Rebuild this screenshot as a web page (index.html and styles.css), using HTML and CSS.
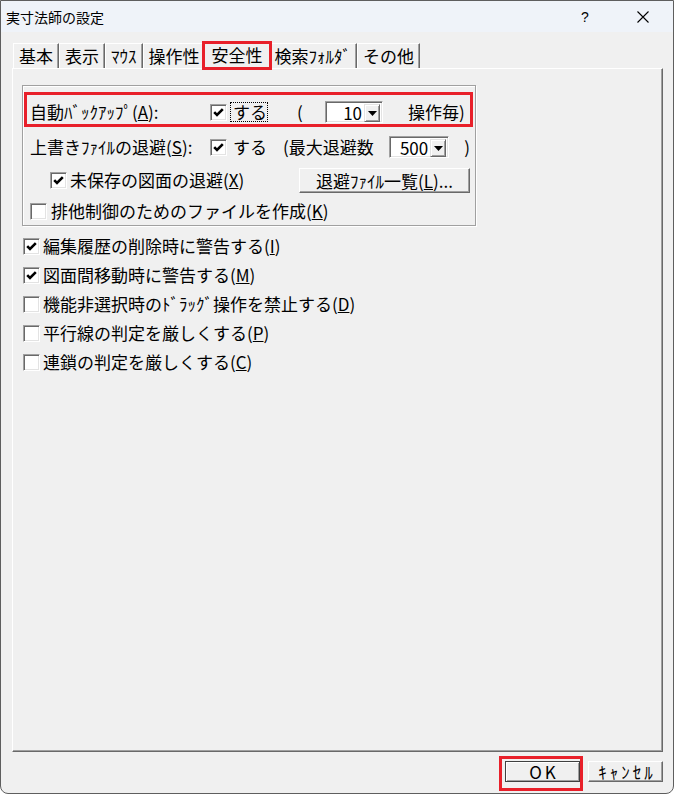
FILE: index.html
```html
<!DOCTYPE html>
<html lang="ja">
<head>
<meta charset="utf-8">
<title>実寸法師の設定</title>
<link rel="stylesheet" href="styles.css">
</head>
<body>
<div class="window">
  <div class="titlebar">
    <span class="title">実寸法師の設定</span>
    <span class="help">?</span>
    <span class="close"><svg width="12" height="12" viewBox="0 0 12 12"><path d="M0.5 0.5 L11.5 11.5 M11.5 0.5 L0.5 11.5" stroke="#000" stroke-width="1.1" fill="none"/></svg></span>
  </div>
  <div class="tabs">
    <div class="tab">基本</div>
    <div class="tab">表示</div>
    <div class="tab">ﾏｳｽ</div>
    <div class="tab">操作性</div>
    <div class="tab active">安全性</div>
    <div class="tab">検索ﾌｫﾙﾀﾞ</div>
    <div class="tab">その他</div>
  </div>
  <div class="panel">
    <div class="group">
      <div class="row row-auto">
        <span class="lbl">自動ﾊﾞｯｸｱｯﾌﾟ(<u>A</u>):</span>
        <span class="cb"><svg width="11" height="9" viewBox="0 0 11 9"><path d="M1.2 4.2 L4 7 L9.8 1.2" stroke="#000" stroke-width="2.6" fill="none"/></svg></span>
        <span class="yes focus">する</span>
        <span class="po">(</span>
        <span class="combo c10"><span class="cv">10</span><span class="dd"><svg width="9" height="5" viewBox="0 0 9 5"><path d="M0 0 H9 L4.5 5 Z" fill="#000"/></svg></span></span>
        <span class="per">操作毎)</span>
      </div>
      <div class="row row-over">
        <span class="lbl">上書きﾌｧｲﾙの退避(<u>S</u>):</span>
        <span class="cb"><svg width="11" height="9" viewBox="0 0 11 9"><path d="M1.2 4.2 L4 7 L9.8 1.2" stroke="#000" stroke-width="2.6" fill="none"/></svg></span>
        <span class="yes">する</span>
        <span class="max">(最大退避数</span>
        <span class="combo c500"><span class="cv">500</span><span class="dd"><svg width="9" height="5" viewBox="0 0 9 5"><path d="M0 0 H9 L4.5 5 Z" fill="#000"/></svg></span></span>
        <span class="pc">)</span>
      </div>
      <div class="row row-unsaved">
        <span class="cb"><svg width="11" height="9" viewBox="0 0 11 9"><path d="M1.2 4.2 L4 7 L9.8 1.2" stroke="#000" stroke-width="2.6" fill="none"/></svg></span>
        <span class="txt">未保存の図面の退避(<u>X</u>)</span>
        <button class="btn btn-list">退避ﾌｧｲﾙ一覧(<u>L</u>)...</button>
      </div>
      <div class="row row-lock">
        <span class="cb"></span>
        <span class="txt">排他制御のためのファイルを作成(<u>K</u>)</span>
      </div>
    </div>
    <div class="list">
      <div class="item">
        <span class="cb"><svg width="11" height="9" viewBox="0 0 11 9"><path d="M1.2 4.2 L4 7 L9.8 1.2" stroke="#000" stroke-width="2.6" fill="none"/></svg></span>
        <span class="txt">編集履歴の削除時に警告する(<u>I</u>)</span>
      </div>
      <div class="item">
        <span class="cb"><svg width="11" height="9" viewBox="0 0 11 9"><path d="M1.2 4.2 L4 7 L9.8 1.2" stroke="#000" stroke-width="2.6" fill="none"/></svg></span>
        <span class="txt">図面間移動時に警告する(<u>M</u>)</span>
      </div>
      <div class="item">
        <span class="cb"></span>
        <span class="txt">機能非選択時のﾄﾞﾗｯｸﾞ操作を禁止する(<u>D</u>)</span>
      </div>
      <div class="item">
        <span class="cb"></span>
        <span class="txt">平行線の判定を厳しくする(<u>P</u>)</span>
      </div>
      <div class="item">
        <span class="cb"></span>
        <span class="txt">連鎖の判定を厳しくする(<u>C</u>)</span>
      </div>
    </div>
  </div>
  <div class="buttons">
    <button class="btn btn-ok">OK</button>
    <button class="btn btn-cancel">ｷｬﾝｾﾙ</button>
  </div>
</div>
</body>
</html>
```

FILE: styles.css
```css
* { box-sizing: border-box; }
html, body { margin: 0; padding: 0; }
body {
  width: 674px;
  height: 794px;
  background: #ffffff;
  font-family: "Noto Sans CJK JP", "Noto Sans", sans-serif;
  font-size: 17px;
  color: #000;
}
.window {
  width: 674px;
  height: 794px;
  border: 1px solid #5e5e5e;
  border-radius: 0 0 8px 8px;
  background: #f0f0f0;
  overflow: hidden;
  display: flex;
  flex-direction: column;
}
.titlebar {
  height: 31px;
  flex-shrink: 0;
  background: #eff3f9;
  display: flex;
  align-items: center;
}
.title {
  flex: 1;
  margin-left: 5px;
  font-size: 14px;
  line-height: 1;
}
.help {
  width: 20px;
  text-align: center;
  font-family: "Liberation Sans", sans-serif;
  font-size: 14px;
  margin-right: 19px;
}
.close {
  width: 58px;
  display: flex;
  justify-content: center;
  margin-right: 1px;
}
.tabs {
  display: flex;
  align-items: flex-end;
  height: 25px;
  margin: 11px 0 0 12px;
  position: relative;
  z-index: 2;
}
.tab {
  height: 25px;
  padding: 0 5px;
  line-height: 23px;
  border-top: 1px solid #fff;
  border-left: 1px solid #fff;
  border-right: 1px solid #696969;
  box-shadow: inset -1px 0 0 #a0a0a0;
  white-space: nowrap;
}
.tab.active {
  height: 28px;
  margin: 0 -2px -1px -2px;
  padding: 0 7px;
  line-height: 26px;
  background: #f0f0f0;
  position: relative;
}
.tab.active::after {
  content: "";
  position: absolute;
  left: -3px;
  right: -2px;
  top: -1px;
  bottom: -1px;
  border: 3px solid #e8202a;
}
.panel {
  margin-left: 11px;
  width: 651px;
  height: 684px;
  flex-shrink: 0;
  border-top: 1px solid #fff;
  border-left: 1px solid #fff;
  border-right: 1px solid #696969;
  border-bottom: 1px solid #696969;
  box-shadow: inset -1px -1px 0 #a0a0a0;
  padding: 16px 0 0 9px;
}
.group {
  width: 454px;
  height: 141px;
  border: 1px solid #a0a0a0;
  box-shadow: inset 1px 1px 0 #fff, 1px 1px 0 #fff;
  padding: 11px 5px 0 7px;
}
.row {
  display: flex;
  align-items: center;
  height: 30px;
  position: relative;
  white-space: nowrap;
  line-height: 1.2;
}
.row-auto::after {
  content: "";
  position: absolute;
  left: -6px;
  right: -3px;
  top: -5px;
  bottom: 0;
  border: 3px solid #e8202a;
}
.row-over { margin-top: 5px; }
.row-unsaved { margin-top: 3px; padding-left: 20px; }
.row-lock { margin-top: 2px; height: 28px; }
.lbl { width: 180px; flex-shrink: 0; }
.cb {
  width: 17px;
  height: 17px;
  flex-shrink: 0;
  background: #fff;
  border-top: 1px solid #a0a0a0;
  border-left: 1px solid #a0a0a0;
  border-right: 1px solid #fff;
  border-bottom: 1px solid #fff;
  box-shadow: inset 1px 1px 0 #696969, inset -1px -1px 0 #e3e3e3;
  display: flex;
  align-items: center;
  justify-content: center;
}
.yes {
  margin-left: 3px;
  width: 38px;
  height: 20px;
  border: 1px dotted transparent;
  padding-left: 2px;
  line-height: 18px;
}
.yes.focus { border-color: #000; }
.po { margin-left: 29px; width: 28px; }
.combo {
  height: 22px;
  display: flex;
  background: #fff;
  border-top: 1px solid #a0a0a0;
  border-left: 1px solid #a0a0a0;
  border-right: 1px solid #fff;
  border-bottom: 1px solid #fff;
  box-shadow: inset 1px 1px 0 #696969, inset -1px -1px 0 #e3e3e3;
  padding: 2px;
}
.c10 { width: 58px; }
.c500 { width: 61px; }
.cv {
  flex: 1;
  text-align: right;
  padding-right: 2px;
  line-height: 17px;
}
.dd {
  width: 16px;
  height: 18px;
  background: #f0f0f0;
  border-top: 1px solid #e3e3e3;
  border-left: 1px solid #e3e3e3;
  border-right: 1px solid #696969;
  border-bottom: 1px solid #696969;
  box-shadow: inset 1px 1px 0 #fff, inset -1px -1px 0 #a0a0a0;
  display: flex;
  align-items: center;
  justify-content: center;
}
.per { margin-left: 25px; }
.max { margin-left: 15px; width: 106px; }
.pc { margin-left: 15px; }
.txt { margin-left: 3px; white-space: nowrap; }
.row-lock .txt { margin-left: 4px; }
.btn {
  font: inherit;
  color: #000;
  background: #f0f0f0;
  padding: 0;
  margin: 0;
  border-top: 1px solid #fff;
  border-left: 1px solid #fff;
  border-right: 1px solid #696969;
  border-bottom: 1px solid #696969;
  box-shadow: inset -1px -1px 0 #a0a0a0;
  display: flex;
  align-items: center;
  justify-content: center;
  line-height: 1;
  white-space: nowrap;
  position: relative;
}
.btn-list { margin-left: auto; width: 171px; height: 25px; }
.list { margin: 6px 0 0 1px; }
.item {
  display: flex;
  align-items: center;
  height: 29px;
  line-height: 1.2;
}
.buttons {
  display: flex;
  justify-content: flex-end;
  gap: 8px;
  margin-top: 9px;
  padding-right: 10px;
}
.btn-ok, .btn-cancel { width: 75px; height: 21px; }
.btn-ok {
  border: 1px solid #404040;
  box-shadow: inset 1px 1px 0 #fff, inset -1px -1px 0 #a0a0a0;
  letter-spacing: 3px;
  padding-left: 3px;
}
.btn-ok::after {
  content: "";
  position: absolute;
  left: -7px;
  right: -4px;
  top: -6px;
  bottom: -10px;
  border: 3px solid #e8202a;
}
.btn-cancel { letter-spacing: 3px; padding-left: 3px; }
```
